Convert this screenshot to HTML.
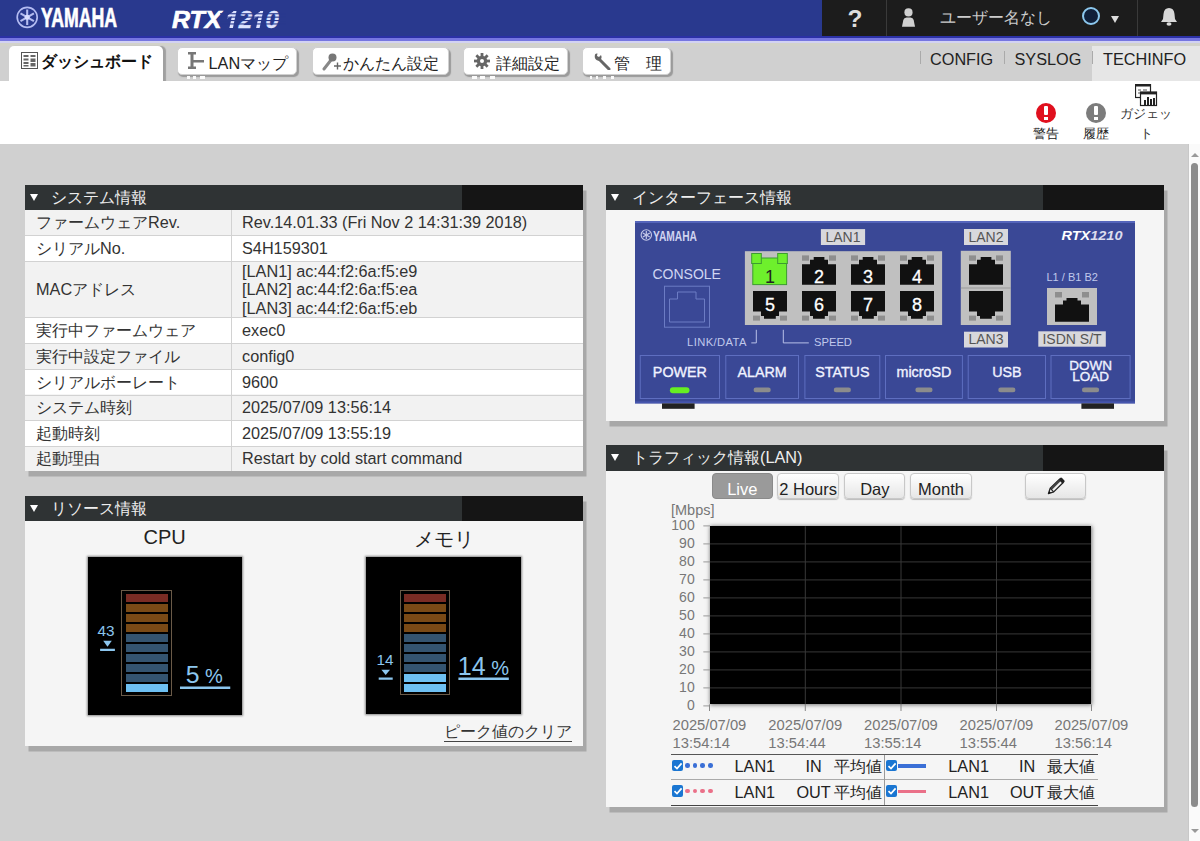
<!DOCTYPE html>
<html><head><meta charset="utf-8">
<style>
*{box-sizing:border-box}
html,body{margin:0;padding:0}
body{width:1200px;height:841px;overflow:hidden;position:relative;background:#d0d0d0;font-family:"Liberation Sans",sans-serif;color:#222}
.a{position:absolute}
.nw{white-space:nowrap}
/* header */
#hdr{left:0;top:0;width:1200px;height:37px;background:#29398e}
#hdrR{left:822px;top:0;width:378px;height:37px;background:#1c1c1c}
#ln1{left:0;top:36px;width:1200px;height:1.5px;background:#2b31a6}
#ln2{left:0;top:37.5px;width:1200px;height:3px;background:#7676e0}
#ln3{left:0;top:40.5px;width:1200px;height:2px;background:#d2d2f2}
#ln4{left:0;top:42.5px;width:1200px;height:3px;background:#d2d2ca}
/* tabs */
.tab{background:#fff;border-radius:5px;border:1px solid #d0d0d0;box-shadow:1.5px 2px 1px #9a9a9a;height:28px;top:46.7px;font-size:16.25px;color:#333}
.tab span{position:absolute;top:5px}
#tabA{left:8.5px;top:46px;width:154.5px;height:35.5px;border-radius:5px 5px 0 0;box-shadow:2.5px 0 1px #a0a0a0;background:#fff}
#techbg{left:1092px;top:45.5px;width:108px;height:35.5px;background:#e6e6e6}
.rl{font-size:16.25px;color:#222;top:49.7px}
.sep{width:1px;background:#aaa;top:51px;height:13px}
#white{left:0;top:81px;width:1200px;height:63px;background:#fff}
/* scrollbar */
#sb{left:1188px;top:144px;width:12px;height:697px;background:#fafafa;border-left:1px solid #c8c8c8}
#sbth{left:1191px;top:163px;width:7px;height:644px;background:#8c8c8c;border-radius:4px}
/* panels */
.pnl{background:#f5f5f5;box-shadow:3.5px 5.5px 0 #a8a8a8}
.ph{left:0;top:0;width:100%;height:24.5px;background:linear-gradient(to right,#2f3334 0,#2f3334 calc(100% - 120.5px),#151515 calc(100% - 120.5px))}
.ph .tri{position:absolute;left:5.3px;top:8.5px;width:0;height:0;border-left:4.1px solid transparent;border-right:4.1px solid transparent;border-top:7.5px solid #fff}
.ph .tt{position:absolute;left:26px;top:2px;font-size:16.25px;color:#eee;white-space:nowrap}

.tr{left:0;width:100%}
.tl{position:absolute;left:11px;top:0;bottom:0;display:flex;align-items:center;font-size:16.25px;color:#333;line-height:18.67px;white-space:nowrap}
.tv{position:absolute;left:217px;top:0;bottom:0;display:flex;align-items:center;font-size:16.25px;color:#333;line-height:18.67px;white-space:nowrap}
.btn{top:472.7px;height:26px;border-radius:4px;border:1px solid #c8c8c8;background:linear-gradient(#fff,#e6e6e6);font-size:16.5px;color:#222;text-align:center;line-height:31px;box-shadow:0 1px 1px #bbb;white-space:nowrap}
.btn.act{background:#9a9a9a;border-color:#8a8a8a;color:#fff;box-shadow:none}
.lg{font-size:16.25px;color:#222;line-height:19px}
</style></head>
<body>
<div class="a" id="hdr"></div>
<div class="a" id="hdrR"></div>
<div class="a" id="ln1"></div><div class="a" id="ln2"></div><div class="a" id="ln3"></div><div class="a" id="ln4"></div>

<!-- YAMAHA logo -->
<svg class="a" style="left:14px;top:4px" width="28" height="28" viewBox="0 0 28 28">
 <circle cx="13.2" cy="13.3" r="10" fill="none" stroke="#b4bcf2" stroke-width="1.7"/>
 <g stroke="#b4bcf0" stroke-width="2.1" stroke-linecap="butt">
  <line x1="13.2" y1="5.5" x2="13.2" y2="21"/>
  <line x1="6.5" y1="9.4" x2="19.9" y2="17.2"/>
  <line x1="19.9" y1="9.4" x2="6.5" y2="17.2"/>
 </g>
 <circle cx="13.2" cy="13.3" r="2.5" fill="#d8dcff"/>
</svg>
<div class="a nw" style="left:40.5px;top:2.5px;font-size:27px;font-weight:bold;color:#fff;transform:scaleX(0.655);transform-origin:0 0;-webkit-text-stroke:0.7px #fff">YAMAHA</div>
<div class="a nw" style="left:172px;top:6px;font-size:24px;font-weight:bold;font-style:italic;color:#fff;transform:scaleX(1.04);transform-origin:0 0;-webkit-text-stroke:0.7px #fff">RTX</div>
<svg class="a" style="left:220px;top:6px" width="66" height="26" viewBox="220 6 66 26">
<polygon points="229.4,11.0 232.9,11.0 232.9,28.0 229.4,28.0 229.4,16.2 225.2,18.6 225.2,15.2 230.0,11.6" fill="#dfe3ff" transform="translate(0 28) skewX(-12) translate(0 -28)"/><polygon points="256.1,11.0 259.6,11.0 259.6,28.0 256.1,28.0 256.1,16.2 251.9,18.6 251.9,15.2 256.7,11.6" fill="#dfe3ff" transform="translate(0 28) skewX(-12) translate(0 -28)"/>
<text x="238.85" y="28" font-size="24" font-weight="bold" font-style="italic" fill="#dfe3ff" stroke="#dfe3ff" stroke-width="0.4" font-family="Liberation Sans">2</text>
<text x="265.55" y="28" font-size="24" font-weight="bold" font-style="italic" fill="#dfe3ff" stroke="#dfe3ff" stroke-width="0.4" font-family="Liberation Sans">0</text>
<g fill="#29398e"><rect x="220" y="13.2" width="66" height="1.1"/><rect x="220" y="16.6" width="66" height="1.1"/><rect x="220" y="20" width="66" height="1.1"/><rect x="220" y="23.4" width="66" height="1.1"/></g>
</svg>
<!-- header right -->
<div class="a nw" style="left:847.5px;top:4.5px;font-size:24.5px;font-weight:bold;color:#dcdcdc">?</div>
<div class="a" style="left:886px;top:0;width:1px;height:36px;background:#3a3a3a"></div>
<svg class="a" style="left:901px;top:8px" width="15" height="19" viewBox="0 0 15 19">
 <circle cx="7.5" cy="4.4" r="4.1" fill="#d0d0d0"/>
 <path d="M1 18.7 L2.3 12 Q3 9.5 5.5 9.5 L9.5 9.5 Q12 9.5 12.7 12 L14 18.7 Z" fill="#d0d0d0"/>
</svg>
<div class="a nw" style="left:940px;top:7px;font-size:16.25px;color:#ccc">ユーザー名なし</div>
<div class="a" style="left:1082px;top:7px;width:18px;height:18px;border-radius:50%;border:2.8px solid #8cc8ee;background:#10203a"></div>
<div class="a" style="left:1111px;top:16px;width:0;height:0;border-left:4.5px solid transparent;border-right:4.5px solid transparent;border-top:7px solid #ddd"></div>
<div class="a" style="left:1136.5px;top:0;width:1px;height:36px;background:#3a3a3a"></div>
<svg class="a" style="left:1160px;top:7px" width="18" height="20" viewBox="0 0 18 20">
 <path d="M9 1 Q4 1 3.5 7 L3 12 L1 15 L17 15 L15 12 L14.5 7 Q14 1 9 1 Z" fill="#d8d8d8"/>
 <ellipse cx="9" cy="17" rx="2.5" ry="1.8" fill="#d8d8d8"/>
</svg>

<!-- tab bar -->
<div class="a" id="techbg"></div>
<div class="a" id="tabA"></div>
<svg class="a" style="left:20.5px;top:52px" width="17" height="17" viewBox="0 0 17 17">
 <rect x="0.5" y="0.5" width="16" height="16" fill="#fff" stroke="#555" stroke-width="1"/>
 <g fill="#666"><rect x="2.5" y="3" width="5" height="2"/><rect x="2.5" y="6.5" width="5" height="2"/><rect x="2.5" y="10" width="5" height="2"/><rect x="2.5" y="13" width="5" height="1.5"/>
 <rect x="9.5" y="3" width="5" height="2"/><rect x="9.5" y="6.5" width="5" height="3.5"/><rect x="9.5" y="11" width="5" height="3.5"/></g>
</svg>
<div class="a nw" style="left:41px;top:51px;font-size:16.25px;font-weight:bold;color:#111">ダッシュボード</div>

<div class="a tab" style="left:176.7px;width:120.6px"></div>
<svg class="a" style="left:187px;top:51px" width="18" height="20" viewBox="0 0 18 20">
 <g fill="#777"><rect x="1" y="1" width="8" height="2.5"/><rect x="3.5" y="3" width="3" height="13"/><rect x="1" y="15.5" width="8" height="2.5"/><rect x="6" y="9" width="11" height="2.5"/></g>
</svg>
<div class="a nw" style="left:208.5px;top:52.5px;font-size:16.25px;color:#222">LANマップ</div>

<div class="a tab" style="left:311.7px;width:137.6px"></div>
<svg class="a" style="left:322px;top:52px" width="20" height="20" viewBox="0 0 20 20">
 <path d="M2 17 L9 8" stroke="#888" stroke-width="3" stroke-linecap="round"/>
 <circle cx="10.5" cy="5.5" r="4" fill="#777"/>
 <path d="M12 14 L19 14 M15.5 10.5 L15.5 17.5" stroke="#666" stroke-width="1.4"/>
</svg>
<div class="a nw" style="left:343px;top:52.5px;font-size:16.25px;color:#222">かんたん設定</div>

<div class="a tab" style="left:463px;width:105px"></div>
<svg class="a" style="left:474px;top:53px" width="16" height="16" viewBox="0 0 16 16">
 <g fill="#666"><circle cx="8" cy="8" r="5.2"/>
 <rect x="6.6" y="0" width="2.8" height="16"/><rect x="0" y="6.6" width="16" height="2.8"/>
 <rect x="6.6" y="0" width="2.8" height="16" transform="rotate(45 8 8)"/><rect x="6.6" y="0" width="2.8" height="16" transform="rotate(-45 8 8)"/></g>
 <circle cx="8" cy="8" r="2" fill="#fff"/>
</svg>
<div class="a nw" style="left:495.5px;top:52.5px;font-size:16.25px;color:#222">詳細設定</div>

<div class="a tab" style="left:582px;width:89px"></div>
<svg class="a" style="left:593px;top:52px" width="18" height="18" viewBox="0 0 18 18">
 <path d="M6 7 L16 17" stroke="#666" stroke-width="3" stroke-linecap="round"/>
 <path d="M2 2.5 Q1 6 3.5 8 Q6 9.5 8 7.5 Q9.5 5.5 8 3 L6 5 L4 4 L4.5 1.5 Q3 1 2 2.5 Z" fill="#666"/>
</svg>
<div class="a nw" style="left:614px;top:52.5px;font-size:16.25px;color:#222">管　理</div>

<div class="a" style="left:186.7px;top:75.6px;width:3px;height:3.8px;background:#fafafa"></div><div class="a" style="left:192.8px;top:75.6px;width:3.5px;height:3.8px;background:#fafafa"></div><div class="a" style="left:199.8px;top:75.6px;width:5.6px;height:3.8px;background:#fafafa"></div><div class="a" style="left:471.9px;top:75.6px;width:5px;height:3.8px;background:#fafafa"></div><div class="a" style="left:480.2px;top:75.6px;width:5px;height:3.8px;background:#fafafa"></div><div class="a" style="left:490.4px;top:75.6px;width:4.5px;height:3.8px;background:#fafafa"></div><div class="a" style="left:590px;top:75.6px;width:1.6px;height:3.8px;background:#fafafa"></div><div class="a" style="left:596px;top:75.6px;width:2px;height:3.8px;background:#fafafa"></div><div class="a" style="left:603px;top:75.6px;width:2.7px;height:3.8px;background:#fafafa"></div><div class="a" style="left:611px;top:75.6px;width:2.7px;height:3.8px;background:#fafafa"></div>
<div class="a sep" style="left:920px"></div>
<div class="a nw rl" style="left:930px">CONFIG</div>
<div class="a sep" style="left:1004px"></div>
<div class="a nw rl" style="left:1014.5px">SYSLOG</div>
<div class="a sep" style="left:1092px"></div>
<div class="a nw rl" style="left:1103px">TECHINFO</div>

<!-- white area -->
<div class="a" id="white"></div>
<div class="a" style="left:1036px;top:103px;width:20px;height:20px;border-radius:50%;background:#e0101e"></div>
<div class="a" style="left:1044.2px;top:106px;width:3.6px;height:9px;background:#fff;border-radius:1px"></div>
<div class="a" style="left:1044.2px;top:117px;width:3.6px;height:3px;background:#fff"></div>
<div class="a nw" style="left:1033px;top:125px;font-size:13px;color:#222">警告</div>
<div class="a" style="left:1086px;top:103px;width:20px;height:20px;border-radius:50%;background:#7c7c7c"></div>
<div class="a" style="left:1094.2px;top:106px;width:3.6px;height:9px;background:#fff;border-radius:1px"></div>
<div class="a" style="left:1094.2px;top:117px;width:3.6px;height:3px;background:#fff"></div>
<div class="a nw" style="left:1083px;top:125px;font-size:13px;color:#222">履歴</div>
<svg class="a" style="left:1135px;top:84px" width="23" height="23" viewBox="0 0 23 23">
 <rect x="0.5" y="0.5" width="15" height="13" fill="#fff" stroke="#222" stroke-width="1.2"/>
 <rect x="0.5" y="0.5" width="15" height="2" fill="#222"/>
 <path d="M3 6 H6 M8 6 H12 M3 9 H5" stroke="#555" stroke-width="1"/>
 <rect x="5.5" y="8" width="16" height="13.5" fill="#fff" stroke="#222" stroke-width="1.2"/>
 <rect x="5.5" y="8" width="16" height="2.4" fill="#222"/>
 <g fill="#222"><rect x="9" y="16" width="2" height="5"/><rect x="12" y="13" width="2" height="8"/><rect x="15" y="15" width="2" height="6"/><rect x="18" y="14" width="2" height="7"/></g>
</svg>
<div class="a nw" style="left:1120px;top:104.5px;font-size:13px;color:#333">ガジェッ</div>
<div class="a nw" style="left:1140px;top:125px;font-size:13px;color:#333">ト</div>

<!-- scrollbar -->
<div class="a" id="sb"></div>
<div class="a" id="sbth"></div>
<div class="a" style="left:1190.5px;top:152.5px;width:0;height:0;border-left:4px solid transparent;border-right:4px solid transparent;border-bottom:4px solid #999"></div>
<div class="a" style="left:1190.5px;top:829px;width:0;height:0;border-left:4px solid transparent;border-right:4px solid transparent;border-top:4px solid #999"></div>

<!-- PANELS -->
<!-- system info -->
<div class="a pnl" style="left:25px;top:185px;width:558px;height:286px">
 <div class="a ph"><div class="tri"></div><div class="tt">システム情報</div></div>
 <div class="a tr" style="top:24.5px;height:25.5px;background:#f2f2f2;"><div class="tl">ファームウェアRev.</div><div class="tv">Rev.14.01.33 (Fri Nov 2 14:31:39 2018)</div></div>
 <div class="a tr" style="top:50.0px;height:25.8px;background:#fff;border-top:1px solid #d2d2d2;"><div class="tl">シリアルNo.</div><div class="tv">S4H159301</div></div>
 <div class="a tr" style="top:75.8px;height:56.5px;background:#f2f2f2;border-top:1px solid #d2d2d2;"><div class="tl">MACアドレス</div><div class="tv">[LAN1] ac:44:f2:6a:f5:e9<br>[LAN2] ac:44:f2:6a:f5:ea<br>[LAN3] ac:44:f2:6a:f5:eb</div></div>
 <div class="a tr" style="top:132.3px;height:25.9px;background:#fff;border-top:1px solid #d2d2d2;"><div class="tl">実行中ファームウェア</div><div class="tv">exec0</div></div>
 <div class="a tr" style="top:158.2px;height:25.7px;background:#f2f2f2;border-top:1px solid #d2d2d2;"><div class="tl">実行中設定ファイル</div><div class="tv">config0</div></div>
 <div class="a tr" style="top:183.9px;height:25.6px;background:#fff;border-top:1px solid #d2d2d2;"><div class="tl">シリアルボーレート</div><div class="tv">9600</div></div>
 <div class="a tr" style="top:209.5px;height:25.5px;background:#f2f2f2;border-top:1px solid #d2d2d2;"><div class="tl">システム時刻</div><div class="tv">2025/07/09 13:56:14</div></div>
 <div class="a tr" style="top:235.0px;height:25.6px;background:#fff;border-top:1px solid #d2d2d2;"><div class="tl">起動時刻</div><div class="tv">2025/07/09 13:55:19</div></div>
 <div class="a tr" style="top:260.6px;height:25.4px;background:#f2f2f2;border-top:1px solid #d2d2d2;"><div class="tl">起動理由</div><div class="tv">Restart by cold start command</div></div>
 <div class="a" style="left:205.5px;top:24.5px;width:1px;height:261.5px;background:#d2d2d2"></div>
</div>
<!-- resource -->
<div class="a pnl" style="left:25px;top:496px;width:558px;height:250.3px">
 <div class="a ph" style="height:25px"><div class="tri"></div><div class="tt">リソース情報</div></div>
</div>
<div class="a nw" style="left:143.5px;top:525.5px;font-size:20px;color:#222">CPU</div>
<div class="a nw" style="left:414px;top:526px;font-size:19.5px;color:#222">メモリ</div>
<div class="a" style="left:88px;top:557px;width:154px;height:157.5px;background:#000;box-shadow:0 0 2px 1px #888"></div>
<div class="a" style="left:365.8px;top:556.5px;width:155.4px;height:157.5px;background:#000;box-shadow:0 0 2px 1px #888"></div>
<div class="a" style="left:121.4px;top:590px;width:50.6px;height:105.5px;border:1px solid #6a5a48"></div>
<div class="a" style="left:125.5px;top:594.4px;width:42.5px;height:8px;background:#7a2c24"></div>
<div class="a" style="left:125.5px;top:604.4px;width:42.5px;height:8px;background:#7a4a16"></div>
<div class="a" style="left:125.5px;top:614.4px;width:42.5px;height:8px;background:#7a4a16"></div>
<div class="a" style="left:125.5px;top:624.4px;width:42.5px;height:8px;background:#7a4a16"></div>
<div class="a" style="left:125.5px;top:634.4px;width:42.5px;height:8px;background:#345470"></div>
<div class="a" style="left:125.5px;top:644.4px;width:42.5px;height:8px;background:#345470"></div>
<div class="a" style="left:125.5px;top:654.4px;width:42.5px;height:8px;background:#345470"></div>
<div class="a" style="left:125.5px;top:664.4px;width:42.5px;height:8px;background:#345470"></div>
<div class="a" style="left:125.5px;top:674.4px;width:42.5px;height:8px;background:#345470"></div>
<div class="a" style="left:125.5px;top:684.4px;width:42.5px;height:8px;background:#6ec0f2"></div>

<div class="a" style="left:399.7px;top:589.8px;width:50.6px;height:105.5px;border:1px solid #6a5a48"></div>
<div class="a" style="left:403.8px;top:594.2px;width:42.5px;height:8px;background:#7a2c24"></div>
<div class="a" style="left:403.8px;top:604.2px;width:42.5px;height:8px;background:#7a4a16"></div>
<div class="a" style="left:403.8px;top:614.2px;width:42.5px;height:8px;background:#7a4a16"></div>
<div class="a" style="left:403.8px;top:624.2px;width:42.5px;height:8px;background:#7a4a16"></div>
<div class="a" style="left:403.8px;top:634.2px;width:42.5px;height:8px;background:#345470"></div>
<div class="a" style="left:403.8px;top:644.2px;width:42.5px;height:8px;background:#345470"></div>
<div class="a" style="left:403.8px;top:654.2px;width:42.5px;height:8px;background:#345470"></div>
<div class="a" style="left:403.8px;top:664.2px;width:42.5px;height:8px;background:#345470"></div>
<div class="a" style="left:403.8px;top:674.2px;width:42.5px;height:8px;background:#6ec0f2"></div>
<div class="a" style="left:403.8px;top:684.2px;width:42.5px;height:8px;background:#6ec0f2"></div>

<svg class="a" style="left:90px;top:615px" width="310" height="70" viewBox="90 615 310 70">
<text x="106" y="636" font-size="15.3" fill="#8cc6ee" text-anchor="middle" font-family="Liberation Sans">43</text>
<path d="M103.2 640.8 H111.8 L107.5 646.7 Z" fill="#8cc6ee"/>
<rect x="100.1" y="648.75" width="14.8" height="2.25" fill="#8cc6ee"/>
<text x="385" y="664.7" font-size="15.3" fill="#8cc6ee" text-anchor="middle" font-family="Liberation Sans">14</text>
<path d="M381.4 669.8 H390 L385.7 675 Z" fill="#8cc6ee"/>
<rect x="378.7" y="677.5" width="14" height="2.25" fill="#8cc6ee"/>
</svg>

<svg class="a" style="left:170px;top:640px" width="360" height="60" viewBox="170 640 360 60"><text x="204.3" y="683.25" fill="#8cc6ee" text-anchor="middle" font-family="Liberation Sans"><tspan font-size="24.8">5</tspan><tspan font-size="20"> %</tspan></text>
<rect x="180" y="686.5" width="50.25" height="2.5" fill="#8cc6ee"/>
<text x="483.4" y="674.5" fill="#8cc6ee" text-anchor="middle" font-family="Liberation Sans"><tspan font-size="25">14</tspan><tspan font-size="20"> %</tspan></text>
<rect x="458.4" y="677.5" width="50.4" height="2.5" fill="#8cc6ee"/></svg>
<div class="a nw" style="left:443.5px;top:721.5px;font-size:16.25px;color:#333;border-bottom:1px solid #444;line-height:19px">ピーク値のクリア</div>
<!-- interface -->
<div class="a pnl" style="left:606px;top:185px;width:558px;height:235.5px">
 <div class="a ph"><div class="tri"></div><div class="tt">インターフェース情報</div></div>
</div>
<svg class="a" style="left:630px;top:215px" width="512" height="200" viewBox="630 215 512 200">
<rect x="635" y="221" width="500" height="182.4" fill="#3a4896"/>
<rect x="635" y="221" width="500" height="2" fill="#5565bb"/>
<rect x="635" y="401.4" width="500" height="2" fill="#4656ae"/>
<rect x="662" y="403.4" width="32.6" height="5.4" fill="#222"/>
<rect x="1081.4" y="403.4" width="32.6" height="5.4" fill="#222"/>
<circle cx="646.3" cy="235" r="5.2" fill="none" stroke="#c4c8e8" stroke-width="1.1"/>
<g stroke="#c4c8e8" stroke-width="1.2"><line x1="646.3" y1="231" x2="646.3" y2="239"/><line x1="642.8" y1="233" x2="649.8" y2="237"/><line x1="649.8" y1="233" x2="642.8" y2="237"/></g>
<text x="653" y="240.7" font-size="15.5" font-weight="bold" fill="#d0d4f0" transform="translate(653 0) scale(0.66 1) translate(-653 0)" font-family="Liberation Sans">YAMAHA</text>
<rect x="820.9" y="229.1" width="44.200000000000045" height="15.900000000000006" fill="#d8d8dc"/><text x="843.0" y="241.8" font-size="14" fill="#555" text-anchor="middle" font-family="Liberation Sans">LAN1</text>
<rect x="964" y="229" width="44" height="16" fill="#d8d8dc"/><text x="986.0" y="241.8" font-size="14" fill="#555" text-anchor="middle" font-family="Liberation Sans">LAN2</text>
<rect x="964" y="331.7" width="44" height="15.800000000000011" fill="#d8d8dc"/><text x="986.0" y="344.3" font-size="14" fill="#555" text-anchor="middle" font-family="Liberation Sans">LAN3</text>
<rect x="1038.3" y="331.3" width="67.5" height="15.399999999999977" fill="#d8d8dc"/><text x="1072.05" y="343.5" font-size="14" fill="#555" text-anchor="middle" font-family="Liberation Sans">ISDN S/T</text>
<rect x="744.9" y="251.2" width="197.2" height="73.8" fill="#c0c0c0"/>
<rect x="960.8" y="250.8" width="50" height="74.2" fill="#c0c0c0"/>
<rect x="960.8" y="287.5" width="50" height="1" fill="#9a9a9a"/>
<rect x="1047" y="288" width="50" height="37" fill="#c0c0c0"/>
<rect x="752.8" y="258" width="33.8" height="26.6" fill="#6ef02c" stroke="#3c9c30" stroke-width="1"/>
<rect x="751.7" y="253.5" width="9.6" height="10" fill="#6ef02c" stroke="#3c9c30" stroke-width="1"/>
<rect x="777.7" y="253.5" width="9.6" height="10" fill="#6ef02c" stroke="#3c9c30" stroke-width="1"/>
<text x="770" y="283" font-size="18" fill="#222" text-anchor="middle" font-family="Liberation Sans">1</text>
<path d="M802 284.8 V264.3 H810 V259.8 H813.7 V257 H824.4 V259.8 H828 V264.3 H836 V284.8 Z" fill="#111"/><rect x="802" y="255.4" width="7" height="5.3" fill="#8e8e8e"/><rect x="829" y="255.4" width="7" height="5.3" fill="#8e8e8e"/><text x="819" y="283" font-size="18" fill="#fff" stroke="#fff" stroke-width="0.3" text-anchor="middle" font-family="Liberation Sans">2</text>
<path d="M851 284.8 V264.3 H859 V259.8 H862.7 V257 H873.4 V259.8 H877 V264.3 H885 V284.8 Z" fill="#111"/><rect x="851" y="255.4" width="7" height="5.3" fill="#8e8e8e"/><rect x="878" y="255.4" width="7" height="5.3" fill="#8e8e8e"/><text x="868" y="283" font-size="18" fill="#fff" stroke="#fff" stroke-width="0.3" text-anchor="middle" font-family="Liberation Sans">3</text>
<path d="M900 284.8 V264.3 H908 V259.8 H911.7 V257 H922.4 V259.8 H926 V264.3 H934 V284.8 Z" fill="#111"/><rect x="900" y="255.4" width="7" height="5.3" fill="#8e8e8e"/><rect x="927" y="255.4" width="7" height="5.3" fill="#8e8e8e"/><text x="917" y="283" font-size="18" fill="#fff" stroke="#fff" stroke-width="0.3" text-anchor="middle" font-family="Liberation Sans">4</text>
<path d="M753 291 H787 V311.5 H779 V316 H775.8 V318.7 H764 V316 H761 V311.5 H753 Z" fill="#111"/><rect x="753" y="315.6" width="7" height="5" fill="#8e8e8e"/><rect x="780" y="315.6" width="7" height="5" fill="#8e8e8e"/><text x="770" y="311" font-size="18" fill="#fff" stroke="#fff" stroke-width="0.3" text-anchor="middle" font-family="Liberation Sans">5</text>
<path d="M802 291 H836 V311.5 H828 V316 H824.8 V318.7 H813 V316 H810 V311.5 H802 Z" fill="#111"/><rect x="802" y="315.6" width="7" height="5" fill="#8e8e8e"/><rect x="829" y="315.6" width="7" height="5" fill="#8e8e8e"/><text x="819" y="311" font-size="18" fill="#fff" stroke="#fff" stroke-width="0.3" text-anchor="middle" font-family="Liberation Sans">6</text>
<path d="M851 291 H885 V311.5 H877 V316 H873.8 V318.7 H862 V316 H859 V311.5 H851 Z" fill="#111"/><rect x="851" y="315.6" width="7" height="5" fill="#8e8e8e"/><rect x="878" y="315.6" width="7" height="5" fill="#8e8e8e"/><text x="868" y="311" font-size="18" fill="#fff" stroke="#fff" stroke-width="0.3" text-anchor="middle" font-family="Liberation Sans">7</text>
<path d="M900 291 H934 V311.5 H926 V316 H922.8 V318.7 H911 V316 H908 V311.5 H900 Z" fill="#111"/><rect x="900" y="315.6" width="7" height="5" fill="#8e8e8e"/><rect x="927" y="315.6" width="7" height="5" fill="#8e8e8e"/><text x="917" y="311" font-size="18" fill="#fff" stroke="#fff" stroke-width="0.3" text-anchor="middle" font-family="Liberation Sans">8</text>
<path d="M969 284.8 V264.3 H977 V259.8 H980.7 V257 H991.4 V259.8 H995 V264.3 H1003 V284.8 Z" fill="#111"/><rect x="969" y="255.4" width="7" height="5.3" fill="#8e8e8e"/><rect x="996" y="255.4" width="7" height="5.3" fill="#8e8e8e"/>
<path d="M969 291 H1003 V311.5 H995 V316 H991.8 V318.7 H980 V316 H977 V311.5 H969 Z" fill="#111"/><rect x="969" y="315.6" width="7" height="5" fill="#8e8e8e"/><rect x="996" y="315.6" width="7" height="5" fill="#8e8e8e"/>
<path d="M1055 321.7 V304.5 H1063 V300.5 H1066.5 V298 H1077.5 V300.5 H1081 V304.5 H1089 V321.7 Z" fill="#111"/>
<rect x="1055" y="292" width="7" height="5.5" fill="#8e8e8e"/><rect x="1082" y="292" width="7" height="5.5" fill="#8e8e8e"/>
<text x="652.5" y="279.3" font-size="14" fill="#d0d6f2" font-family="Liberation Sans">CONSOLE</text>
<text x="1046.5" y="280.8" font-size="11" fill="#c0c8ec" font-family="Liberation Sans">L1 / B1 B2</text>
<text x="1061.5" y="240" font-size="13" font-weight="bold" font-style="italic" fill="#fff" font-family="Liberation Sans" textLength="61" lengthAdjust="spacingAndGlyphs">RTX<tspan fill="#dde">1210</tspan></text>
<text x="687" y="345.6" font-size="11.2" fill="#c0c8ec" font-family="Liberation Sans" textLength="59.5" lengthAdjust="spacing">LINK/DATA</text>
<text x="814" y="345.6" font-size="11.2" fill="#c0c8ec" font-family="Liberation Sans">SPEED</text>
<path d="M756.3 329.8 V342.9 H751.3" fill="none" stroke="#b8c0e8" stroke-width="1"/>
<path d="M783.3 329.8 V342.9 H808.8" fill="none" stroke="#b8c0e8" stroke-width="1"/>
<rect x="664.5" y="286.2" width="45" height="41" fill="none" stroke="#6c7cc4" stroke-width="1"/>
<path d="M669.5 322 V299 H677.5 V292 H696 V299 H704.5 V322 Z" fill="none" stroke="#6c7cc4" stroke-width="1"/>
<rect x="640.25" y="355.5" width="79.25" height="43" fill="none" stroke="#5e6ec0" stroke-width="1"/>
<text x="679.875" y="377.4" font-size="14.3" fill="#f0f2ff" stroke="#f0f2ff" stroke-width="0.35" text-anchor="middle" font-family="Liberation Sans">POWER</text>
<rect x="669.875" y="387.2" width="19.6" height="6" rx="3" fill="#66ee22"/>
<rect x="725.8" y="355.5" width="72.70000000000005" height="43" fill="none" stroke="#5e6ec0" stroke-width="1"/>
<text x="762.15" y="377.4" font-size="14.3" fill="#f0f2ff" stroke="#f0f2ff" stroke-width="0.35" text-anchor="middle" font-family="Liberation Sans">ALARM</text>
<rect x="753.55" y="387.6" width="17.2" height="4.6" rx="2.3" fill="#8c8c8c"/>
<rect x="804.9" y="355.5" width="74.89999999999998" height="43" fill="none" stroke="#5e6ec0" stroke-width="1"/>
<text x="842.3499999999999" y="377.4" font-size="14.3" fill="#f0f2ff" stroke="#f0f2ff" stroke-width="0.35" text-anchor="middle" font-family="Liberation Sans">STATUS</text>
<rect x="833.7499999999999" y="387.6" width="17.2" height="4.6" rx="2.3" fill="#8c8c8c"/>
<rect x="885.5" y="355.5" width="76.89999999999998" height="43" fill="none" stroke="#5e6ec0" stroke-width="1"/>
<text x="923.95" y="377.4" font-size="14.3" fill="#f0f2ff" stroke="#f0f2ff" stroke-width="0.35" text-anchor="middle" font-family="Liberation Sans">microSD</text>
<rect x="915.35" y="387.6" width="17.2" height="4.6" rx="2.3" fill="#8c8c8c"/>
<rect x="968.2" y="355.5" width="77.29999999999995" height="43" fill="none" stroke="#5e6ec0" stroke-width="1"/>
<text x="1006.85" y="377.4" font-size="14.3" fill="#f0f2ff" stroke="#f0f2ff" stroke-width="0.35" text-anchor="middle" font-family="Liberation Sans">USB</text>
<rect x="998.25" y="387.6" width="17.2" height="4.6" rx="2.3" fill="#8c8c8c"/>
<rect x="1051.0" y="355.5" width="79.09999999999991" height="43" fill="none" stroke="#5e6ec0" stroke-width="1"/>
<text x="1090.55" y="369.8" font-size="13.5" fill="#f0f2ff" stroke="#f0f2ff" stroke-width="0.35" text-anchor="middle" font-family="Liberation Sans">DOWN</text>
<text x="1090.55" y="380.8" font-size="13.5" fill="#f0f2ff" stroke="#f0f2ff" stroke-width="0.35" text-anchor="middle" font-family="Liberation Sans">LOAD</text>
<rect x="1081.95" y="387.6" width="17.2" height="4.6" rx="2.3" fill="#8c8c8c"/>
</svg>
<!-- traffic -->
<div class="a pnl" style="left:606px;top:445px;width:558px;height:362px">
 <div class="a ph" style="height:25.8px"><div class="tri" style="top:9px"></div><div class="tt">トラフィック情報(LAN)</div></div>
</div>
<div class="a btn act" style="left:711.6px;width:61.4px">Live</div>
<div class="a btn" style="left:777.3px;width:61.7px">2 Hours</div>
<div class="a btn" style="left:844.3px;width:61.1px">Day</div>
<div class="a btn" style="left:910.2px;width:61.7px">Month</div>
<div class="a btn" style="left:1025.3px;width:60.5px"></div>
<svg class="a" style="left:1047px;top:477px" width="18" height="18" viewBox="0 0 18 18"><g transform="translate(1.4 16.6) rotate(-44.4)">
<path d="M0 0 L5 -2.5 L18 -2.5 L18 2.5 L5 2.5 Z" fill="#f0f0f0" stroke="#222" stroke-width="1.3" stroke-linejoin="round"/>
<path d="M0 0 L2.4 -1.2 L2.4 1.2 Z" fill="#111"/>
<path d="M5.3 -2.3 L18 -2.3 L18 -0.3 L5.3 -0.3 Z" fill="#444"/>
<path d="M5 -2.5 L5 2.5" stroke="#222" stroke-width="1.2"/>
<rect x="17.2" y="-2.9" width="3.4" height="5.8" rx="1.4" fill="#222"/>
</g></svg>
<div class="a nw" style="left:671px;top:501.5px;font-size:14.5px;color:#777">[Mbps]</div>
<div class="a" style="left:710px;top:526.3px;width:380.8px;height:178.1px;background:#000;box-shadow:0.5px 0.5px 4px 0.5px #777"></div>
<svg class="a" style="left:660px;top:515px" width="450" height="200" viewBox="660 515 450 200">
<rect x="703.3" y="525.40" width="6.7" height="1" fill="#999"/>
<text x="694.7" y="529.80" font-size="14" fill="#777" text-anchor="end" font-family="Liberation Sans">100</text>
<rect x="710" y="543.40" width="380.8" height="1" fill="#383838"/>
<rect x="703.3" y="543.40" width="6.7" height="1" fill="#999"/>
<text x="694.7" y="547.80" font-size="14" fill="#777" text-anchor="end" font-family="Liberation Sans">90</text>
<rect x="710" y="561.40" width="380.8" height="1" fill="#383838"/>
<rect x="703.3" y="561.40" width="6.7" height="1" fill="#999"/>
<text x="694.7" y="565.80" font-size="14" fill="#777" text-anchor="end" font-family="Liberation Sans">80</text>
<rect x="710" y="579.40" width="380.8" height="1" fill="#383838"/>
<rect x="703.3" y="579.40" width="6.7" height="1" fill="#999"/>
<text x="694.7" y="583.80" font-size="14" fill="#777" text-anchor="end" font-family="Liberation Sans">70</text>
<rect x="710" y="597.40" width="380.8" height="1" fill="#383838"/>
<rect x="703.3" y="597.40" width="6.7" height="1" fill="#999"/>
<text x="694.7" y="601.80" font-size="14" fill="#777" text-anchor="end" font-family="Liberation Sans">60</text>
<rect x="710" y="615.40" width="380.8" height="1" fill="#383838"/>
<rect x="703.3" y="615.40" width="6.7" height="1" fill="#999"/>
<text x="694.7" y="619.80" font-size="14" fill="#777" text-anchor="end" font-family="Liberation Sans">50</text>
<rect x="710" y="633.40" width="380.8" height="1" fill="#383838"/>
<rect x="703.3" y="633.40" width="6.7" height="1" fill="#999"/>
<text x="694.7" y="637.80" font-size="14" fill="#777" text-anchor="end" font-family="Liberation Sans">40</text>
<rect x="710" y="651.40" width="380.8" height="1" fill="#383838"/>
<rect x="703.3" y="651.40" width="6.7" height="1" fill="#999"/>
<text x="694.7" y="655.80" font-size="14" fill="#777" text-anchor="end" font-family="Liberation Sans">30</text>
<rect x="710" y="669.40" width="380.8" height="1" fill="#383838"/>
<rect x="703.3" y="669.40" width="6.7" height="1" fill="#999"/>
<text x="694.7" y="673.80" font-size="14" fill="#777" text-anchor="end" font-family="Liberation Sans">20</text>
<rect x="710" y="687.40" width="380.8" height="1" fill="#383838"/>
<rect x="703.3" y="687.40" width="6.7" height="1" fill="#999"/>
<text x="694.7" y="691.80" font-size="14" fill="#777" text-anchor="end" font-family="Liberation Sans">10</text>
<rect x="703.3" y="705.40" width="6.7" height="1" fill="#999"/>
<text x="694.7" y="709.80" font-size="14" fill="#777" text-anchor="end" font-family="Liberation Sans">0</text>
<rect x="709.0" y="704.4" width="1" height="6.6" fill="#888"/>
<rect x="804.8" y="526.3" width="1" height="178.1" fill="#383838"/>
<rect x="804.8" y="704.4" width="1" height="6.6" fill="#888"/>
<rect x="900.5" y="526.3" width="1" height="178.1" fill="#383838"/>
<rect x="900.5" y="704.4" width="1" height="6.6" fill="#888"/>
<rect x="996.0" y="526.3" width="1" height="178.1" fill="#383838"/>
<rect x="996.0" y="704.4" width="1" height="6.6" fill="#888"/>
<rect x="1091.0" y="704.4" width="1" height="6.6" fill="#888"/>
</svg>
<div class="a nw" style="left:672.5px;top:716.8px;font-size:14.75px;color:#777;line-height:17.8px">2025/07/09<br>13:54:14</div>
<div class="a nw" style="left:768.3px;top:716.8px;font-size:14.75px;color:#777;line-height:17.8px">2025/07/09<br>13:54:44</div>
<div class="a nw" style="left:864.0px;top:716.8px;font-size:14.75px;color:#777;line-height:17.8px">2025/07/09<br>13:55:14</div>
<div class="a nw" style="left:959.5px;top:716.8px;font-size:14.75px;color:#777;line-height:17.8px">2025/07/09<br>13:55:44</div>
<div class="a nw" style="left:1054.5px;top:716.8px;font-size:14.75px;color:#777;line-height:17.8px">2025/07/09<br>13:56:14</div>
<div class="a" style="left:670.75px;top:753.6px;width:427.5px;height:1.2px;background:#555"></div>
<div class="a" style="left:670.75px;top:779.1px;width:427.5px;height:1px;background:#aaa"></div>
<div class="a" style="left:670.75px;top:804.6px;width:427.5px;height:1.2px;background:#444"></div>
<div class="a" style="left:884px;top:754.5px;width:1px;height:50.5px;background:#999"></div>
<div class="a" style="left:671.7px;top:759.6px;width:11.8px;height:11.8px;background:#1a76d2;border-radius:2px"></div><svg class="a" style="left:671.7px;top:759.6px" width="12" height="12" viewBox="0 0 12 12"><path d="M2.5 6.2 L5 8.6 L9.6 3.4" fill="none" stroke="#fff" stroke-width="1.7"/></svg>
<div class="a" style="left:685.0px;top:763.3px;width:4.5px;height:4.5px;border-radius:50%;background:#3a6fd6"></div>
<div class="a" style="left:692.7px;top:763.3px;width:4.5px;height:4.5px;border-radius:50%;background:#3a6fd6"></div>
<div class="a" style="left:700.4px;top:763.3px;width:4.5px;height:4.5px;border-radius:50%;background:#3a6fd6"></div>
<div class="a" style="left:708.1px;top:763.3px;width:4.5px;height:4.5px;border-radius:50%;background:#3a6fd6"></div>
<div class="a nw lg" style="left:734.5px;top:756.88px">LAN1</div>
<div class="a nw lg" style="left:790px;width:47.2px;text-align:center;top:756.88px">IN</div>
<div class="a nw lg" style="left:833.5px;top:756.88px">平均値</div>
<div class="a" style="left:885.5px;top:759.6px;width:11.8px;height:11.8px;background:#1a76d2;border-radius:2px"></div><svg class="a" style="left:885.5px;top:759.6px" width="12" height="12" viewBox="0 0 12 12"><path d="M2.5 6.2 L5 8.6 L9.6 3.4" fill="none" stroke="#fff" stroke-width="1.7"/></svg>
<div class="a" style="left:898px;top:764.0px;width:28.4px;height:3.5px;background:#3a6fd6"></div>
<div class="a nw lg" style="left:948.3px;top:756.88px">LAN1</div>
<div class="a nw lg" style="left:1004px;width:46.2px;text-align:center;top:756.88px">IN</div>
<div class="a nw lg" style="left:1047.3px;top:756.88px">最大値</div>
<div class="a" style="left:671.7px;top:785.1px;width:11.8px;height:11.8px;background:#1a76d2;border-radius:2px"></div><svg class="a" style="left:671.7px;top:785.1px" width="12" height="12" viewBox="0 0 12 12"><path d="M2.5 6.2 L5 8.6 L9.6 3.4" fill="none" stroke="#fff" stroke-width="1.7"/></svg>
<div class="a" style="left:685.0px;top:788.8px;width:4.5px;height:4.5px;border-radius:50%;background:#ea7088"></div>
<div class="a" style="left:692.7px;top:788.8px;width:4.5px;height:4.5px;border-radius:50%;background:#ea7088"></div>
<div class="a" style="left:700.4px;top:788.8px;width:4.5px;height:4.5px;border-radius:50%;background:#ea7088"></div>
<div class="a" style="left:708.1px;top:788.8px;width:4.5px;height:4.5px;border-radius:50%;background:#ea7088"></div>
<div class="a nw lg" style="left:734.5px;top:782.63px">LAN1</div>
<div class="a nw lg" style="left:790px;width:47.2px;text-align:center;top:782.63px">OUT</div>
<div class="a nw lg" style="left:833.5px;top:782.63px">平均値</div>
<div class="a" style="left:885.5px;top:785.1px;width:11.8px;height:11.8px;background:#1a76d2;border-radius:2px"></div><svg class="a" style="left:885.5px;top:785.1px" width="12" height="12" viewBox="0 0 12 12"><path d="M2.5 6.2 L5 8.6 L9.6 3.4" fill="none" stroke="#fff" stroke-width="1.7"/></svg>
<div class="a" style="left:898px;top:789.5px;width:28.4px;height:3.5px;background:#ea7088"></div>
<div class="a nw lg" style="left:948.3px;top:782.63px">LAN1</div>
<div class="a nw lg" style="left:1004px;width:46.2px;text-align:center;top:782.63px">OUT</div>
<div class="a nw lg" style="left:1047.3px;top:782.63px">最大値</div>
</body></html>
